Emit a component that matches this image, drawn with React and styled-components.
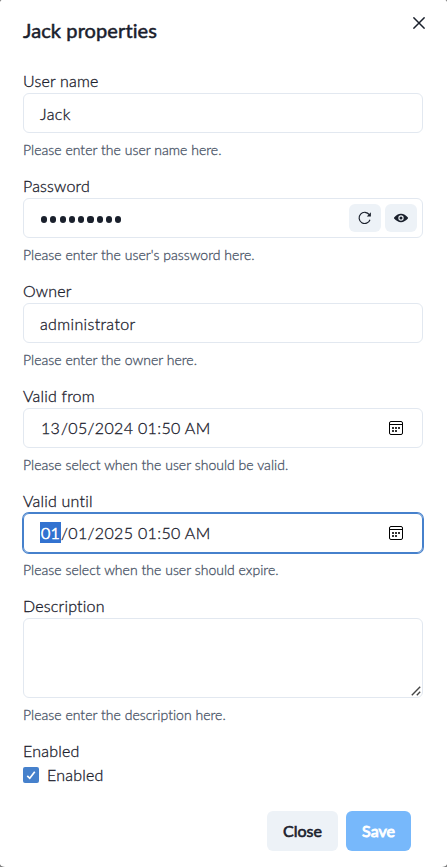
import React from 'react';
import styled, { createGlobalStyle, css } from 'styled-components';

const GlobalStyle = createGlobalStyle`
  *, *::before, *::after { box-sizing: border-box; }
  body {
    margin: 0;
    background: #808080;
    color: #1a202c;
    font-family: Lato, "Open Sans", sans-serif;
    font-size: 16px;
    font-weight: 400;
    line-height: 24px;
    font-variant-ligatures: none;
    overflow: hidden;
  }
`;

const Dialog = styled.section`
  position: relative;
  width: 449px;
  height: 868px;
  margin: -1px 0 0 -1px;
  padding-right: 1px;
  background: #fff;
  border-radius: 6px;
`;

const Header = styled.header`
  padding: 16px 24px;
  height: 62px;
  font-size: 20px;
  line-height: 30px;
  font-weight: 400;
  letter-spacing: 0.1px;
  -webkit-text-stroke: 0.5px currentColor;
`;

const CloseIcon = styled.button`
  position: absolute;
  top: 8px;
  right: 13px;
  width: 32px;
  height: 32px;
  display: flex;
  align-items: center;
  justify-content: center;
  padding: 0;
  border: 0;
  background: transparent;
  color: #1a202c;
`;

const Body = styled.div`
  display: flex;
  flex-direction: column;
  gap: 16px;
  padding: 8px 24px;
`;

const Field = styled.div`
  display: flex;
  flex-direction: column;
`;

const Label = styled.label`
  height: 24px;
  font-weight: 300;
  letter-spacing: 0.2px;
  -webkit-text-stroke: 0.3px currentColor;
`;

const Control = styled.div`
  display: flex;
  align-items: center;
  height: ${(p) => p.$height || 40}px;
  padding: 2px 5px 0 16px;
  border: 1px solid #e2e8f0;
  border-radius: 6px;
  font-weight: 300;
  letter-spacing: 0.36px;
  -webkit-text-stroke: 0.3px currentColor;
  ${(p) =>
    p.$focused &&
    css`
      border-color: #4681cc;
      box-shadow: 0 0 0 1px #4681cc;
    `}
`;

const AreaControl = styled(Control)`
  align-items: flex-end;
  justify-content: flex-end;
  padding: 0 1px 1px 0;
`;

const Helper = styled.div`
  margin-top: 8px;
  height: 17px;
  font-size: 14px;
  line-height: 17px;
  font-weight: 300;
  letter-spacing: 0.025px;
  -webkit-text-stroke: 0.3px currentColor;
  color: #4a5568;
`;

const Dots = styled.div`
  display: flex;
  flex: 1;
  gap: 3.1px;
  padding: 1px 0 0 1px;
`;

const Dot = styled.span`
  width: 6.2px;
  height: 6.2px;
  border-radius: 50%;
  background: #1a202c;
`;

const Actions = styled.div`
  display: flex;
  gap: 4px;
  margin-top: -2px;
`;

const IconButton = styled.button`
  display: flex;
  align-items: center;
  justify-content: center;
  width: 32px;
  height: 28px;
  padding: 0;
  border: 0;
  border-radius: 6px;
  background: #edf2f7;
  color: #1a202c;
`;

const DateText = styled.div`
  display: flex;
  flex: 1;
  margin-top: -3px;
  letter-spacing: 0.34px;
  white-space: pre;
`;

const DatePart = styled.span`
  width: 21px;
  height: 21px;
  line-height: 21px;
  padding-left: 1px;
  ${(p) =>
    p.$selected &&
    css`
      background: #3272d0;
      color: #fff;
      -webkit-text-stroke-width: 0.7px;
    `}
`;

const DateRest = styled.span`
  line-height: 21px;
`;

const CalendarSlot = styled.span`
  display: flex;
  margin: -2px 14px 0 0;
`;

const CheckRow = styled.div`
  display: flex;
  align-items: center;
  gap: 8px;
  height: 24px;
`;

const CheckBox = styled.span`
  display: flex;
  align-items: center;
  justify-content: center;
  width: 16px;
  height: 16px;
  border-radius: 2px;
  background: #4681cc;
`;

const Footer = styled.footer`
  display: flex;
  justify-content: flex-end;
  gap: 8px;
  padding: 16px 36px 16px 24px;
`;

const Button = styled.button`
  width: ${(p) => (p.$primary ? 65 : 71)}px;
  height: 40px;
  padding: 0;
  border: 0;
  border-radius: 6px;
  background: ${(p) => (p.$primary ? '#77b8fb' : '#edf2f7')};
  color: ${(p) => (p.$primary ? '#fff' : '#1a202c')};
  font: 400 16px/20px Lato, sans-serif;
  -webkit-text-stroke: ${(p) => (p.$primary ? 0.9 : 0.6)}px currentColor;
`;

const Cross = () => (
  <svg width="12" height="12" viewBox="0 0 12 12" fill="none" stroke="currentColor" strokeWidth="1.5">
    <path d="M.4.4l11.2 11.2M11.6.4L.4 11.6" />
  </svg>
);

const Reload = () => (
  <svg width="14" height="14" viewBox="0 0 14 14" fill="none">
    <path d="M12 8.7A5.6 5.6 0 1 1 11.3 3.7" stroke="currentColor" strokeWidth="1.15" />
    <path d="M12.9 1.3V5.4H8.8z" fill="currentColor" />
  </svg>
);

const Eye = () => (
  <svg width="14" height="14" viewBox="0 0 24 24" fill="currentColor">
    <path d="M23.432,10.524C20.787,7.614,16.4,4.538,12,4.6,7.6,4.537,3.213,7.615.568,10.524a2.211,2.211,0,0,0,0,2.948C3.182,16.351,7.507,19.4,11.839,19.4h.308c4.347,0,8.671-3.049,11.288-5.929A2.21,2.21,0,0,0,23.432,10.524ZM7.4,12A4.6,4.6,0,1,1,12,16.6,4.6,4.6,0,0,1,7.4,12Z" />
    <circle cx="12" cy="12" r="2.6" />
  </svg>
);

const Calendar = () => (
  <svg width="14" height="14" viewBox="0 0 14 14" fill="none">
    <rect x=".5" y=".5" width="13" height="13" rx="1.5" stroke="#000" />
    <path d="M1 3.5h12" stroke="#000" />
    <path d="M3 6h2v2H3zM6 6h2v2H6zM9 6h2v2H9zM3 9h2v2H3zM6 9h2v2H6z" fill="#333" />
  </svg>
);

const Check = () => (
  <svg width="10" height="10" viewBox="0 0 12 10" fill="none" stroke="#fff" strokeWidth="2">
    <path d="M1.5 6L4.5 9L10.5 1" />
  </svg>
);

const Grip = () => (
  <svg width="10" height="10" viewBox="0 0 10 10" fill="none" stroke="#444" strokeWidth="1.4">
    <path d="M.8 9.2L9.2.8M5.8 9.2L9.2 5.8" />
  </svg>
);

function FormField({ label, helper, children }) {
  return (
    <Field>
      <Label>{label}</Label>
      {children}
      {helper && <Helper>{helper}</Helper>}
    </Field>
  );
}

function DateControl({ day, rest, focused }) {
  return (
    <Control $focused={focused}>
      <DateText>
        <DatePart $selected={focused}>{day}</DatePart>
        <DateRest>{rest}</DateRest>
      </DateText>
      <CalendarSlot><Calendar /></CalendarSlot>
    </Control>
  );
}

export default function App() {
  return (
    <>
      <GlobalStyle />
      <Dialog>
        <Header>Jack properties</Header>
        <CloseIcon aria-label="Close dialog"><Cross /></CloseIcon>
        <Body>
          <FormField label="User name" helper="Please enter the user name here.">
            <Control>Jack</Control>
          </FormField>
          <FormField label="Password" helper="Please enter the user's password here.">
            <Control>
              <Dots>{Array.from({ length: 9 }, (_, i) => <Dot key={i} />)}</Dots>
              <Actions>
                <IconButton aria-label="Generate"><Reload /></IconButton>
                <IconButton aria-label="Show"><Eye /></IconButton>
              </Actions>
            </Control>
          </FormField>
          <FormField label="Owner" helper="Please enter the owner here.">
            <Control>administrator</Control>
          </FormField>
          <FormField label="Valid from" helper="Please select when the user should be valid.">
            <DateControl day="13" rest="/05/2024 01:50 AM" />
          </FormField>
          <FormField label="Valid until" helper="Please select when the user should expire.">
            <DateControl day="01" rest="/01/2025 01:50 AM" focused />
          </FormField>
          <FormField label="Description" helper="Please enter the description here.">
            <AreaControl $height={80}><Grip /></AreaControl>
          </FormField>
          <FormField label="Enabled">
            <CheckRow>
              <CheckBox><Check /></CheckBox>
              <Label>Enabled</Label>
            </CheckRow>
          </FormField>
        </Body>
        <Footer>
          <Button>Close</Button>
          <Button $primary>Save</Button>
        </Footer>
      </Dialog>
    </>
  );
}
